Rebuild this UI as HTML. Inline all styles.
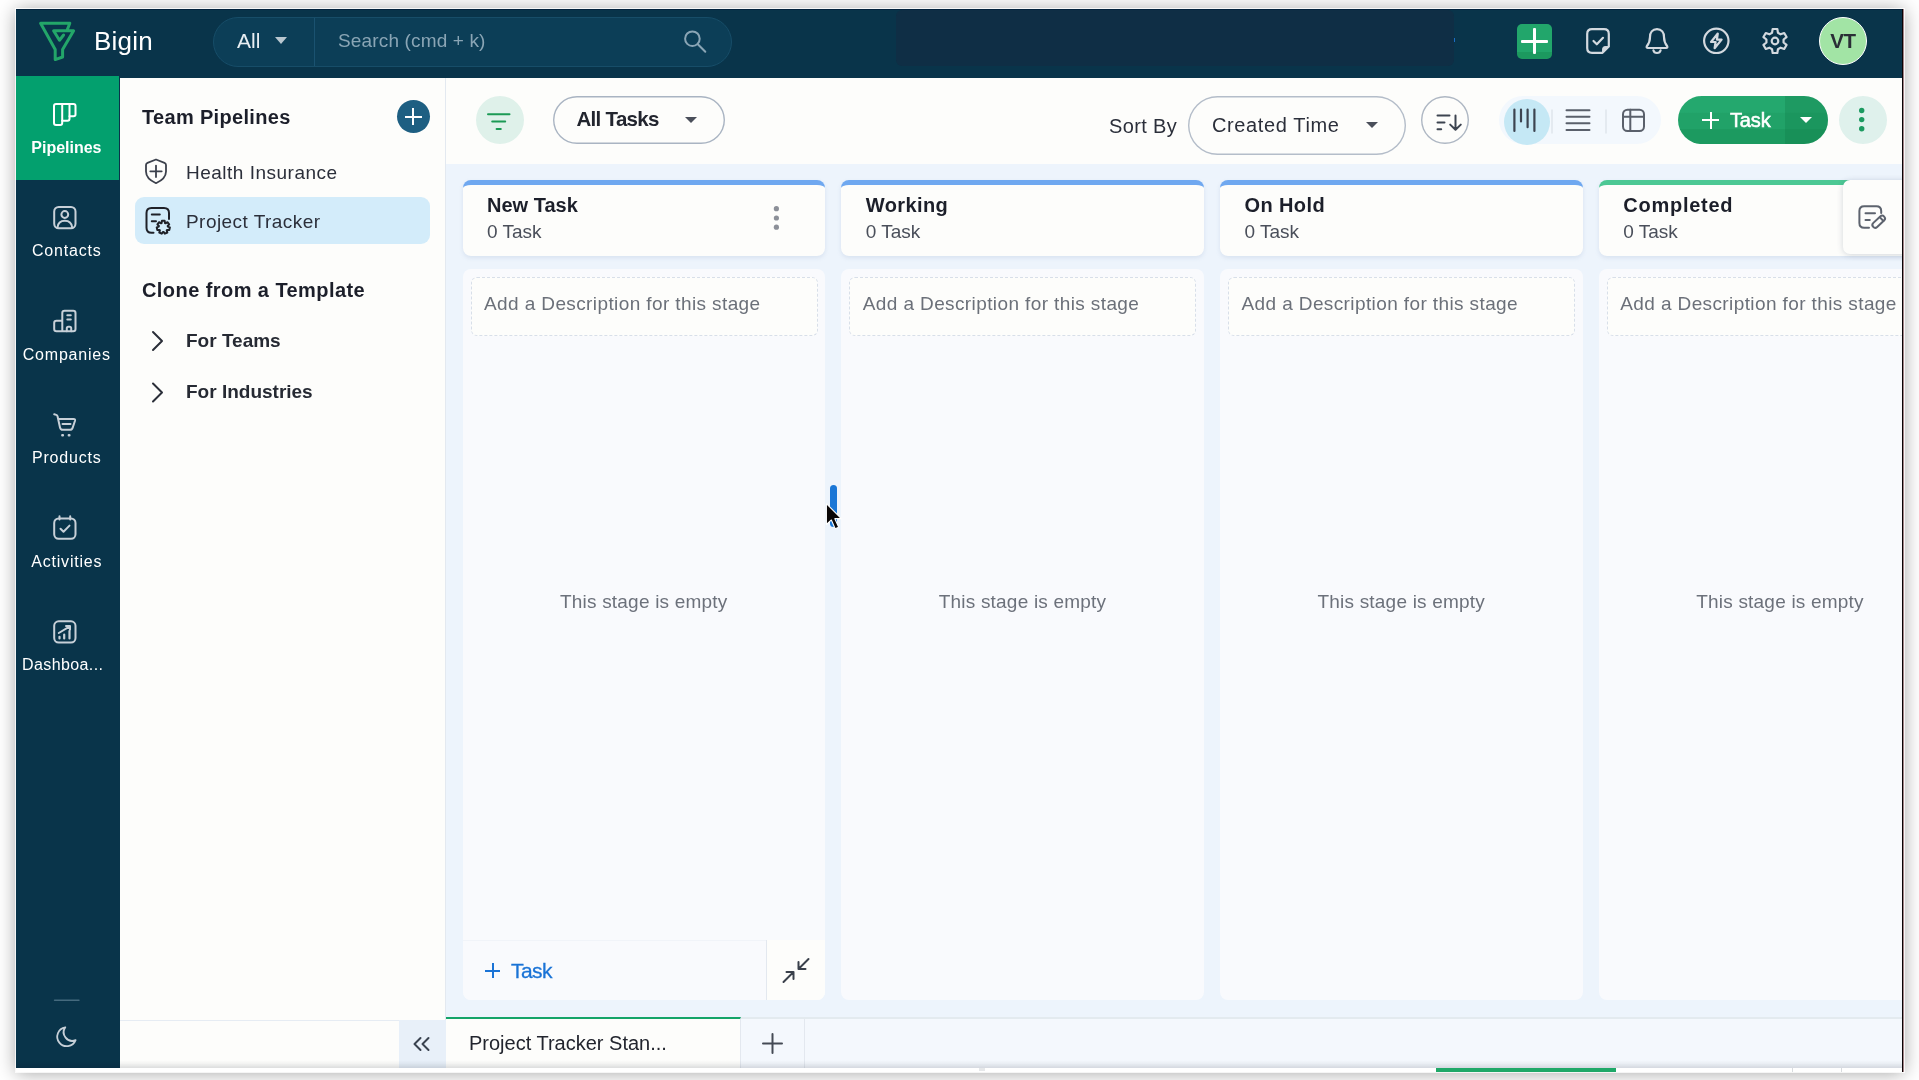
<!DOCTYPE html>
<html lang="en">
<head>
<meta charset="utf-8">
<title>Bigin - Project Tracker</title>
<style>
*{box-sizing:border-box;margin:0;padding:0}
html,body{width:1919px;height:1080px;overflow:hidden;background:#fff}
body{font-family:"Liberation Sans",sans-serif;color:#1c1f2a;position:relative}
.abs,.t,svg.i{position:absolute}
.t{white-space:nowrap;line-height:1}
svg.i{overflow:visible}
#topfade{display:none}
#win{left:16px;top:9px;width:1888px;height:1063px;background:#fdfdfb;box-shadow:0 0 0 1px rgba(255,255,255,.8),0 1px 18px rgba(0,0,0,.37);overflow:hidden}
#pg{left:-16px;top:-9px;width:1919px;height:1080px;will-change:transform}
#hdr{left:16px;top:9px;width:1888px;height:69px;background:#09344a}
#nav{left:16px;top:76px;width:104px;height:995px;background:#09344a}
#navsel{left:16px;top:76px;width:102.500px;height:104px;background:#03a06e}
#side{left:120px;top:78px;width:326px;height:993px;background:#fdfdfb;border-right:1px solid #e3e9f0}
#toolbar{left:446px;top:78px;width:1458px;height:86px;background:#fdfdfb}
#board{left:446px;top:164px;width:1458px;height:854px;background:#edf4fc}
.nl{margin-top:.7px;left:15.400px;width:102px;text-align:center;font-size:16px;color:#fff;height:20px;line-height:20px;letter-spacing:.8px;text-indent:.8px}
.sl{left:186px;font-size:19px;height:24px;line-height:24px;margin-top:1px;color:#2b2f3a}
.colh{top:180px;width:362.500px;height:76px;border-radius:8px;background:#fdfdfb;border-top:5px solid #6fa8f0;box-shadow:0 2px 4px rgba(120,150,190,.18)}
.colb{top:269px;width:362.500px;height:731px;border-radius:8px;background:#f9fafd}
.desc{top:277px;width:347px;height:59px;border-radius:6px;border:1px dashed #d8dfe9;background:#fdfdfb}
.ct{top:192px;font-size:20px;font-weight:bold;height:26px;line-height:26px;color:#1c1f2a}
.cs{top:219px;font-size:19px;height:26px;line-height:26px;color:#4a4f5a}
.dt{top:291px;letter-spacing:.39px;font-size:19px;height:26px;line-height:26px;color:#6b7079}
.em{top:589px;width:362.500px;text-align:center;font-size:19px;height:26px;line-height:26px;color:#6c717b;letter-spacing:.2px}
</style>
</head>
<body>
<div id="topfade" class="abs"></div>
<div id="win" class="abs"><div id="pg" class="abs">
  <div id="hdr" class="abs"></div>
  <div id="nav" class="abs"></div>
  <div id="navsel" class="abs"></div>
  <div id="side" class="abs"></div>
  <div id="toolbar" class="abs"></div>
  <div id="board" class="abs"></div>

  <!-- header -->
  <svg class="i" style="left:0;top:0" width="1919" height="80" viewBox="0 0 1919 80" fill="none">
    <g stroke="#23a669" stroke-width="3" stroke-linejoin="round" stroke-linecap="round">
      <path d="M67.2 30 L69.8 23.2 H40.6 L55.2 49.5 V59.6 L62.6 57 V49.5 L73.6 30.8 H53.6 L59.5 40.2 L63.6 35"/>
    </g>
  </svg>
  <div class="t" style="left:94px;top:26px;font-size:26px;color:#fff;height:30px;line-height:30px;letter-spacing:.2px">Bigin</div>
  <div class="abs" style="left:213px;top:17px;width:519px;height:50px;border-radius:25px;background:#0c3e57;border:1px solid #174d68"></div>
  <div class="abs" style="left:314px;top:18px;width:1px;height:48px;background:#1a5270"></div>
  <div class="t" style="left:237px;top:29px;font-size:21px;color:#e8eef2;height:24px;line-height:24px">All</div>
  <div class="abs" style="left:275px;top:37.200px;width:0;height:0;border-left:6.5px solid transparent;border-right:6.5px solid transparent;border-top:7px solid #b9c7d0"></div>
  <div class="t" style="left:338px;top:29px;font-size:19px;color:#8aa5b5;height:24px;line-height:24px;letter-spacing:.15px">Search (cmd + k)</div>
  <svg class="i" style="left:682px;top:29px" width="26" height="26" viewBox="0 0 26 26" fill="none" stroke="#8aa5b5" stroke-width="2" stroke-linecap="round"><circle cx="10.400" cy="9.700" r="7.300"/><path d="M15.800 15.300 L23.300 22.800"/></svg>
  <div class="abs" style="left:896px;top:9.500px;width:558px;height:56px;background:#0f2e45;border-radius:6px"></div>
  <div class="abs" style="left:16px;top:9px;width:1886px;height:1px;background:#03233d"></div>
  <div class="abs" style="left:1454px;top:37.500px;width:1.300px;height:4.500px;background:#1b6dc4"></div>
  <div class="abs" style="left:1517px;top:24px;width:35px;height:35px;border-radius:5px;background:linear-gradient(#22a66b 0,#22a66b 80%,#1c995f 80%,#1c995f 100%)"></div>
  <div class="abs" style="left:1521px;top:40.200px;width:27px;height:2.500px;background:#fff;border-radius:1px"></div>
  <div class="abs" style="left:1533.300px;top:28px;width:2.500px;height:26px;background:#fff;border-radius:1px"></div>
  <svg class="i" style="left:1584px;top:27px" width="28" height="28" viewBox="0 0 28 28" fill="none" stroke="#d3d9df" stroke-width="2.2" stroke-linecap="round" stroke-linejoin="round">
    <path d="M8 2.200 H20 Q24.800 2.200 24.800 7 V19.500 L18.500 25.800 H8 Q3.200 25.800 3.200 21 V7 Q3.200 2.200 8 2.200 Z"/>
    <path d="M24.600 19.600 H21 Q18.600 19.600 18.600 22 V25.600 Z" fill="#d3d9df" stroke-width="1"/>
    <path d="M9.500 14 L12.800 17.300 L19 10.800"/>
  </svg>
  <svg class="i" style="left:1643px;top:27px" width="28" height="28" viewBox="0 0 28 28" fill="none" stroke="#d3d9df" stroke-width="2.200" stroke-linecap="round" stroke-linejoin="round">
    <path d="M14 2.200 C9.300 2.200 7 5.800 7 10 C7 14.500 5.600 17 3.800 19.200 C3.300 20.200 3.800 21 4.800 21 H23.200 C24.200 21 24.700 20.200 24.200 19.200 C22.400 17 21 14.500 21 10 C21 5.800 18.700 2.200 14 2.200 Z"/>
    <path d="M10.400 23.300 C10.800 25 12.200 26 14 26 C15.800 26 17.200 25 17.600 23.300"/>
  </svg>
  <svg class="i" style="left:1702px;top:27px" width="28" height="28" viewBox="0 0 28 28" fill="none" stroke="#d3d9df" stroke-width="2.200" stroke-linecap="round" stroke-linejoin="round">
    <circle cx="14.300" cy="13.800" r="12.200"/>
    <path d="M15.800 6.500 L9 15 H13.600 L12.600 21.200 L19.600 12.600 H14.900 Z"/>
  </svg>
  <svg class="i" style="left:1761px;top:27px" width="28" height="28" viewBox="-14 -14 28 28" fill="none" stroke="#d3d9df" stroke-width="2.200" stroke-linecap="round" stroke-linejoin="round">
    <circle cx="0" cy="0" r="3.300"/>
    <path d="M2.98 -8.18 L2.33 -11.98 L-2.33 -11.98 L-2.98 -8.18 L-5.59 -6.66 L-9.21 -8.00 L-11.54 -3.97 L-8.57 -1.51 L-8.57 1.51 L-11.54 3.97 L-9.21 8.00 L-5.59 6.66 L-2.98 8.18 L-2.33 11.98 L2.33 11.98 L2.98 8.18 L5.59 6.66 L9.21 8.00 L11.54 3.97 L8.57 1.51 L8.57 -1.51 L11.54 -3.97 L9.21 -8.00 L5.59 -6.66 Z"/>
  </svg>
  <div class="abs" style="left:1819px;top:17px;width:48px;height:48px;border-radius:50%;background:#a2e4a5;border:1.500px solid #fff"></div>
  <div class="t" style="left:1819px;top:29px;width:48px;text-align:center;font-size:20.500px;font-weight:bold;color:#2a2e36;height:24px;line-height:24px;letter-spacing:-.3px">VT</div>


  <!-- nav -->
  <svg class="i" style="left:16px;top:76px" width="103" height="995" viewBox="16 76 103 995" fill="none" stroke-width="2" stroke-linecap="round" stroke-linejoin="round">
    <g stroke="#fff">
      <path d="M56 104 H73.500 Q75.500 104 75.500 106 V114.500 Q75.500 116.300 73.500 116.300 H69.500 V118.800 Q69.500 120.800 67.500 120.800 H62.200 V123 Q62.200 125 60.200 125 H56 Q54 125 54 123 V106 Q54 104 56 104 Z"/><path d="M62.200 104 V120.800 M69.500 104 V116.300"/>
    </g>
    <g stroke="#c7d0d8">
      <rect x="54.200" y="207" width="21.300" height="21.300" rx="4.500"/>
      <circle cx="64.800" cy="214.500" r="3.400"/>
      <path d="M57.500 227.500 C58 222.500 61 220.800 64.800 220.800 C68.600 220.800 71.600 222.500 72.200 227.500"/>

      <path d="M62.300 331.300 V313 Q62.300 310.700 64.600 310.700 H73.200 Q75.500 310.700 75.500 313 V329 Q75.500 331.300 73.200 331.300 H56.500 Q54.200 331.300 54.200 329 V323 Q54.200 320.700 56.500 320.700 H62.300"/>
      <path d="M67.300 315.200 H70.800 M67.300 319.600 H70.800"/>
      <path d="M66.800 331.300 V328.300 Q66.800 326.800 68.300 326.800 H69.700 Q71.200 326.800 71.200 328.300 V331.300"/>

      <path d="M54.200 414.300 L56.200 414.900 Q57.300 415.300 57.600 416.500 L60 427.500 Q60.500 429.800 62.800 429.800 H69.800 Q72 429.800 72.700 427.600 L75 420.800 Q75.500 418.900 73.500 418.900 H58.200"/>
      <path d="M62.500 424 H70.500"/>
      <path d="M62.300 435.300 H62.900 M68.800 435.300 H69.400" stroke-width="2.400"/>

      <rect x="54.200" y="518.500" width="21.300" height="20.300" rx="4.500"/>
      <path d="M59.500 516.300 V519.500 M70.200 516.300 V519.500"/>
      <path d="M60.500 528.800 L63.500 531.800 L69.500 525.600"/>

      <rect x="54.200" y="621.300" width="21.300" height="21.300" rx="4.500"/>
      <path d="M59.500 638.500 V636.800 M64.200 638.500 V634.500 M69.500 638.500 V631" stroke-width="2.200"/>
      <path d="M58.800 633 L69.800 626.300 M66 626 H70 V629.800"/>
    </g>
    <path d="M54.500 1000.200 H79" stroke="#456a7e" stroke-width="1.400"/>
    <path d="M65.300 1027.300 A9.500 9.500 0 1 0 75.600 1040.200 A8.600 8.600 0 0 1 65.300 1027.300 Z" stroke="#c7d0d8" stroke-width="1.800"/>
  </svg>
  <div class="t nl" style="top:137px;font-weight:bold;color:#fff;letter-spacing:0;text-indent:0">Pipelines</div>
  <div class="t nl" style="top:240px">Contacts</div>
  <div class="t nl" style="top:344px">Companies</div>
  <div class="t nl" style="top:447px">Products</div>
  <div class="t nl" style="top:551px">Activities</div>
  <div class="t nl" style="top:654px;letter-spacing:.4px;text-indent:0;text-align:left;left:22px">Dashboa...</div>


  <!-- sidebar -->
  <div class="t" style="left:142px;top:104px;font-size:20px;font-weight:bold;height:26px;line-height:26px;color:#1c1f2a;letter-spacing:.32px">Team Pipelines</div>
  <div class="abs" style="left:396.500px;top:100px;width:33px;height:33px;border-radius:50%;background:#1e5f82"></div>
  <div class="abs" style="left:404.500px;top:115.500px;width:17px;height:2px;background:#fff"></div>
  <div class="abs" style="left:412px;top:108px;width:2px;height:17px;background:#fff"></div>
  <div class="abs" style="left:135px;top:197px;width:295px;height:47px;border-radius:9px;background:#d3ecfa"></div>
  <svg class="i" style="left:119px;top:78px" width="327" height="400" viewBox="119 78 327 400" fill="none" stroke-linecap="round" stroke-linejoin="round">
    <g stroke="#3c414c" stroke-width="1.800">
      <path d="M156 159.500 L164.500 162.800 Q166 163.400 166 165 V171.500 C166 177 162 180.500 156 183.200 C150 180.500 146 177 146 171.500 V165 Q146 163.400 147.500 162.800 Z"/>
      <path d="M150.300 171.300 H161.700 M156 165.600 V177"/>
    </g>
    <g stroke="#1f2128" stroke-width="2">
      <path d="M169 219 V213 Q169 208 164 208 H151.500 Q146.500 208 146.500 213 V227.800 Q146.500 232.800 151.500 232.800 H153.500"/>
      <path d="M151.800 214.600 H159.800 M151.800 221.200 H156"/>
      <path d="M165.02 223.03 L164.67 220.84 L161.93 220.84 L161.58 223.03 L161.04 223.29 L159.11 222.20 L157.40 224.35 L158.89 225.99 L158.76 226.57 L156.70 227.40 L157.31 230.07 L159.53 229.93 L159.90 230.40 L159.26 232.52 L161.74 233.71 L163.00 231.89 L163.60 231.89 L164.86 233.71 L167.34 232.52 L166.70 230.40 L167.07 229.93 L169.29 230.07 L169.90 227.40 L167.84 226.57 L167.71 225.99 L169.20 224.35 L167.49 222.20 L165.56 223.29 Z"/>
    </g>
    <g stroke="#2a2e38" stroke-width="2">
      <path d="M153 332 L162 341 L153 350"/>
      <path d="M153 383.500 L162 392.500 L153 401.500"/>
    </g>
  </svg>
  <div class="t sl" style="top:160px;letter-spacing:.5px">Health Insurance</div>
  <div class="t sl" style="top:209px;letter-spacing:.45px">Project Tracker</div>
  <div class="t" style="left:142px;top:277px;font-size:20px;font-weight:bold;height:26px;line-height:26px;color:#1c1f2a;letter-spacing:.43px">Clone from a Template</div>
  <div class="t sl" style="top:329px;margin-top:0;font-weight:bold;color:#262a33">For Teams</div>
  <div class="t sl" style="top:380px;margin-top:0;font-weight:bold;color:#262a33">For Industries</div>
  <div class="abs" style="left:120px;top:1019.500px;width:326px;height:1px;background:#e6ecf3"></div>
  <div class="abs" style="left:399px;top:1020px;width:47px;height:48px;background:#e8f0f9"></div>
  <svg class="i" style="left:411px;top:1034px" width="22" height="20" viewBox="0 0 22 20" fill="none" stroke="#3a4350" stroke-width="2" stroke-linecap="round" stroke-linejoin="round"><path d="M9.500 4 L3.500 10 L9.500 16 M17.500 4 L11.500 10 L17.500 16"/></svg>


  <!-- toolbar -->
  <div class="abs" style="left:475.500px;top:96px;width:48px;height:48px;border-radius:50%;background:#dff1ea"></div>
  <svg class="i" style="left:475px;top:96px" width="48" height="48" viewBox="475 96 48 48" fill="none" stroke="#1c9a55" stroke-width="2" stroke-linecap="round"><path d="M488 114.200 H509.500 M492.200 121.600 H505.200 M496.600 129 H500.800"/></svg>
  <div class="abs" style="left:552.500px;top:96px;width:172.500px;height:48px;border-radius:24px;box-shadow:inset 0 0 0 1.400px #a9b4c2;background:#fdfdfb"></div>
  <div class="t" style="left:576.500px;top:106.300px;font-size:20.500px;font-weight:bold;height:26px;line-height:26px;color:#22252e;letter-spacing:-.7px">All Tasks</div>
  <div class="abs" style="left:685px;top:117px;width:0;height:0;border-left:6.500px solid transparent;border-right:6.500px solid transparent;border-top:6.500px solid #4a4f5a"></div>
  <div class="t" style="left:1109px;top:113px;font-size:20px;height:26px;line-height:26px;color:#2b2f3a;letter-spacing:.35px">Sort By</div>
  <div class="abs" style="left:1188px;top:96px;width:218px;height:59px;border-radius:29.500px;box-shadow:inset 0 0 0 1.400px #b4bdc9;background:#fdfdfb"></div>
  <div class="t" style="left:1212px;top:112px;font-size:20px;height:26px;line-height:26px;color:#2b2f3a;letter-spacing:.62px">Created Time</div>
  <div class="abs" style="left:1366px;top:122px;width:0;height:0;border-left:6.500px solid transparent;border-right:6.500px solid transparent;border-top:6.500px solid #4a4f5a"></div>
  <div class="abs" style="left:1421px;top:96px;width:48px;height:48px;border-radius:50%;box-shadow:inset 0 0 0 1.400px #aeb7c3;background:#fdfdfb"></div>
  <svg class="i" style="left:1421px;top:96px" width="48" height="48" viewBox="1421 96 48 48" fill="none" stroke="#3d4450" stroke-width="2" stroke-linecap="round" stroke-linejoin="round"><path d="M1437.500 115.600 H1449.500 M1437.500 122.500 H1444.500 M1437.500 129.300 H1441.200 M1455.500 115.600 V129.500 M1450.200 124.600 L1455.500 129.800 L1460.800 124.600"/></svg>
  <div class="abs" style="left:1499px;top:96px;width:162px;height:48px;border-radius:24px;background:#f3f8fd"></div>
  <div class="abs" style="left:1504px;top:99px;width:46px;height:46px;border-radius:50%;background:#c5e8f5"></div>
  <svg class="i" style="left:1499px;top:96px" width="162" height="50" viewBox="1499 96 162 50" fill="none" stroke-width="2.200" stroke-linecap="round" stroke-linejoin="round">
    <path d="M1514.400 109.500 V131 M1521 109.500 V121.500 M1527.600 109.500 V127.200 M1534.400 109.500 V131" stroke="#3d4450"/>
    <path d="M1552 110 V133 M1606 110 V133" stroke="#dfe5ec" stroke-width="1.500"/>
    <path d="M1566.500 110.300 H1589.500 M1566.500 116.800 H1589.500 M1566.500 123.300 H1589.500 M1566.500 129.900 H1589.500" stroke="#5a606b" stroke-width="2"/>
    <g stroke="#5a606b" stroke-width="2"><rect x="1623" y="109.700" width="21" height="21.300" rx="4.500"/><path d="M1623 116.700 H1644 M1630.300 109.700 V131"/></g>
  </svg>
  <div class="abs" style="left:1678px;top:96px;width:150px;height:48px;border-radius:24px;overflow:hidden;background:linear-gradient(#24a86e 0,#24a86e 34%,#21a268 36%,#21a268 68%,#1c9a60 70%,#1c9a60 100%)"><div class="abs" style="left:107px;top:0;width:43px;height:48px;background:rgba(14,120,70,.28)"></div></div>
  <div class="abs" style="left:1702px;top:119px;width:17px;height:2px;background:#fff"></div>
  <div class="abs" style="left:1709.500px;top:111.500px;width:2px;height:17px;background:#fff"></div>
  <div class="t" style="left:1730px;top:107px;font-size:20px;height:26px;line-height:26px;color:#fff;-webkit-text-stroke:.55px #fff;letter-spacing:-.15px">Task</div>
  <div class="abs" style="left:1800px;top:117px;width:0;height:0;border-left:6.500px solid transparent;border-right:6.500px solid transparent;border-top:6.500px solid #fff"></div>
  <div class="abs" style="left:1838.500px;top:96px;width:48px;height:48px;border-radius:50%;background:#dff1ec"></div>
  <svg class="i" style="left:1838px;top:96px" width="48" height="48" viewBox="1838 96 48 48" fill="#1c9a60"><circle cx="1861.700" cy="110.500" r="2.700"/><circle cx="1861.700" cy="119.600" r="2.700"/><circle cx="1861.700" cy="128.700" r="2.700"/></svg>


  <!-- board -->
  <div class="abs" style="left:446px;top:164px;width:1456px;height:854px;overflow:hidden"><div class="abs" style="left:-446px;top:-164px;width:1919px;height:1080px">
  <div class="abs colh" style="left:462.5px;border-top-color:#6fa8f0"></div>
  <div class="t ct" style="left:487.0px">New Task</div>
  <div class="t cs" style="left:487.0px">0 Task</div>
  <div class="abs colb" style="left:462.5px"></div>
  <div class="abs desc" style="left:470.5px"></div>
  <div class="t dt" style="left:484.0px">Add a Description for this stage</div>
  <div class="t em" style="left:462.5px">This stage is empty</div>
  <div class="abs colh" style="left:841.25px;border-top-color:#6fa8f0"></div>
  <div class="t ct" style="left:865.75px;letter-spacing:.4px">Working</div>
  <div class="t cs" style="left:865.75px">0 Task</div>
  <div class="abs colb" style="left:841.25px"></div>
  <div class="abs desc" style="left:849.25px"></div>
  <div class="t dt" style="left:862.75px">Add a Description for this stage</div>
  <div class="t em" style="left:841.25px">This stage is empty</div>
  <div class="abs colh" style="left:1220.0px;border-top-color:#6fa8f0"></div>
  <div class="t ct" style="left:1244.5px;letter-spacing:.4px">On Hold</div>
  <div class="t cs" style="left:1244.5px">0 Task</div>
  <div class="abs colb" style="left:1220.0px"></div>
  <div class="abs desc" style="left:1228.0px"></div>
  <div class="t dt" style="left:1241.5px">Add a Description for this stage</div>
  <div class="t em" style="left:1220.0px">This stage is empty</div>
  <div class="abs colh" style="left:1598.75px;border-top-color:#4cc894"></div>
  <div class="t ct" style="left:1623.25px;letter-spacing:.75px">Completed</div>
  <div class="t cs" style="left:1623.25px">0 Task</div>
  <div class="abs colb" style="left:1598.75px"></div>
  <div class="abs desc" style="left:1606.75px"></div>
  <div class="t dt" style="left:1620.25px">Add a Description for this stage</div>
  <div class="t em" style="left:1598.75px">This stage is empty</div>
  <svg class="i" style="left:770px;top:200px" width="14" height="36" viewBox="770 200 14 36" fill="#8c9098"><circle cx="776.400" cy="208.700" r="2.600"/><circle cx="776.400" cy="218" r="2.600"/><circle cx="776.400" cy="227.200" r="2.600"/></svg>
  <div class="abs" style="left:462.500px;top:940px;width:362.500px;height:60px;border-radius:0 0 8px 8px;background:#f9fafd;border-top:1px solid #f1f4f9"></div>
  <div class="abs" style="left:766px;top:940px;width:59px;height:60px;border-radius:0 0 8px 0;background:#fdfdfb;border-left:1px solid #e3e8ef"></div>
  <div class="abs" style="left:485px;top:969.500px;width:15px;height:2px;background:#1a73d6"></div>
  <div class="abs" style="left:491.500px;top:963px;width:2px;height:15px;background:#1a73d6"></div>
  <div class="t" style="left:511px;top:957.500px;font-size:21px;height:26px;line-height:26px;color:#1a73d6;letter-spacing:-.6px;-webkit-text-stroke:.3px #1a73d6">Task</div>
  <svg class="i" style="left:780px;top:955px" width="32" height="32" viewBox="780 955 32 32" fill="none" stroke="#3a404b" stroke-width="2" stroke-linecap="round" stroke-linejoin="round"><path d="M808.500 959 L798.500 969 M798.500 962 V969 H805.500 M783.500 982 L793.500 972 M786.500 972 H793.500 V979"/></svg>
  <div class="abs" style="left:830px;top:485px;width:7px;height:42px;border-radius:3.500px;background:#1976d6"></div>
  <div class="abs" style="left:1843px;top:180px;width:70px;height:74px;border-radius:7px 0 0 7px;background:#fdfdfb;box-shadow:0 1px 6px rgba(40,60,90,.2)"></div>
  <svg class="i" style="left:1856px;top:203px" width="32" height="30" viewBox="1856 203 32 30" fill="none" stroke="#5d636e" stroke-width="2" stroke-linecap="round" stroke-linejoin="round"><path d="M1881.200 213 V211 Q1881.200 206.200 1876.400 206.200 H1864.200 Q1859.400 206.200 1859.400 211 V223 Q1859.400 227.800 1864.200 227.800 H1869"/><path d="M1865.500 213.200 H1875 M1865.500 220 H1869.800"/><rect x="1871.200" y="218.900" width="15" height="5.600" rx="2.800" transform="rotate(-43 1878.700 221.700)"/><path d="M1880.200 217.600 L1883.400 221"/></svg>
  </div></div>


  <!-- tabs -->
  <div class="abs" style="left:446px;top:1017px;width:1456px;height:54px;background:#f4f8fd;border-top:2px solid #e3eaef"></div>
  <div class="abs" style="left:446px;top:1017px;width:295px;height:54px;background:#fdfdfb;border-top:2px solid #14a468;border-right:1px solid #e3e8ef"></div>
  <div class="t" style="left:469px;top:1030px;font-size:20px;height:26px;line-height:26px;color:#22252e">Project Tracker Stan...</div>
  <div class="abs" style="left:804px;top:1019px;width:1px;height:50px;background:#e3e8ef"></div>
  <svg class="i" style="left:761px;top:1032px" width="24" height="24" viewBox="0 0 24 24" fill="none" stroke="#444a55" stroke-width="2" stroke-linecap="round"><path d="M2 11.500 H21 M11.500 2 V21"/></svg>
  <div class="abs" style="left:16px;top:1060px;width:1886px;height:7.500px;background:linear-gradient(rgba(0,10,25,0),rgba(0,10,25,.035) 40%,rgba(0,10,25,.13))"></div>
  <div class="abs" style="left:16px;top:1067.500px;width:1886px;height:5px;background:#fff"></div>
  <div class="abs" style="left:979px;top:1067.500px;width:6px;height:3px;background:#e6e8ea"></div>
  <div class="abs" style="left:1436px;top:1068px;width:180px;height:4px;background:#1fa868"></div>
  <div class="abs" style="left:1792px;top:1067.500px;width:1px;height:4.500px;background:#d9dcdf"></div><div class="abs" style="left:1841px;top:1067.500px;width:1px;height:4.500px;background:#d9dcdf"></div>
    <div class="abs" style="left:1901.750px;top:9px;width:1.250px;height:1063px;background:#0a0405"></div>
  <div class="abs" style="left:1903px;top:9px;width:1.200px;height:1063px;background:linear-gradient(90deg,#6b3f45,#d9c8cb)"></div>

</div></div>
<svg class="i" style="left:823.800px;top:502px" width="19.500" height="30.300" viewBox="0 0 18 28"><path d="M2.200 1.500 V20.800 L6.800 16.600 L10.300 24.800 L13.600 23.300 L10 15.400 H16 Z" fill="#0a0606" stroke="#fff" stroke-width="1" stroke-linejoin="round"/></svg>

</body>
</html>
